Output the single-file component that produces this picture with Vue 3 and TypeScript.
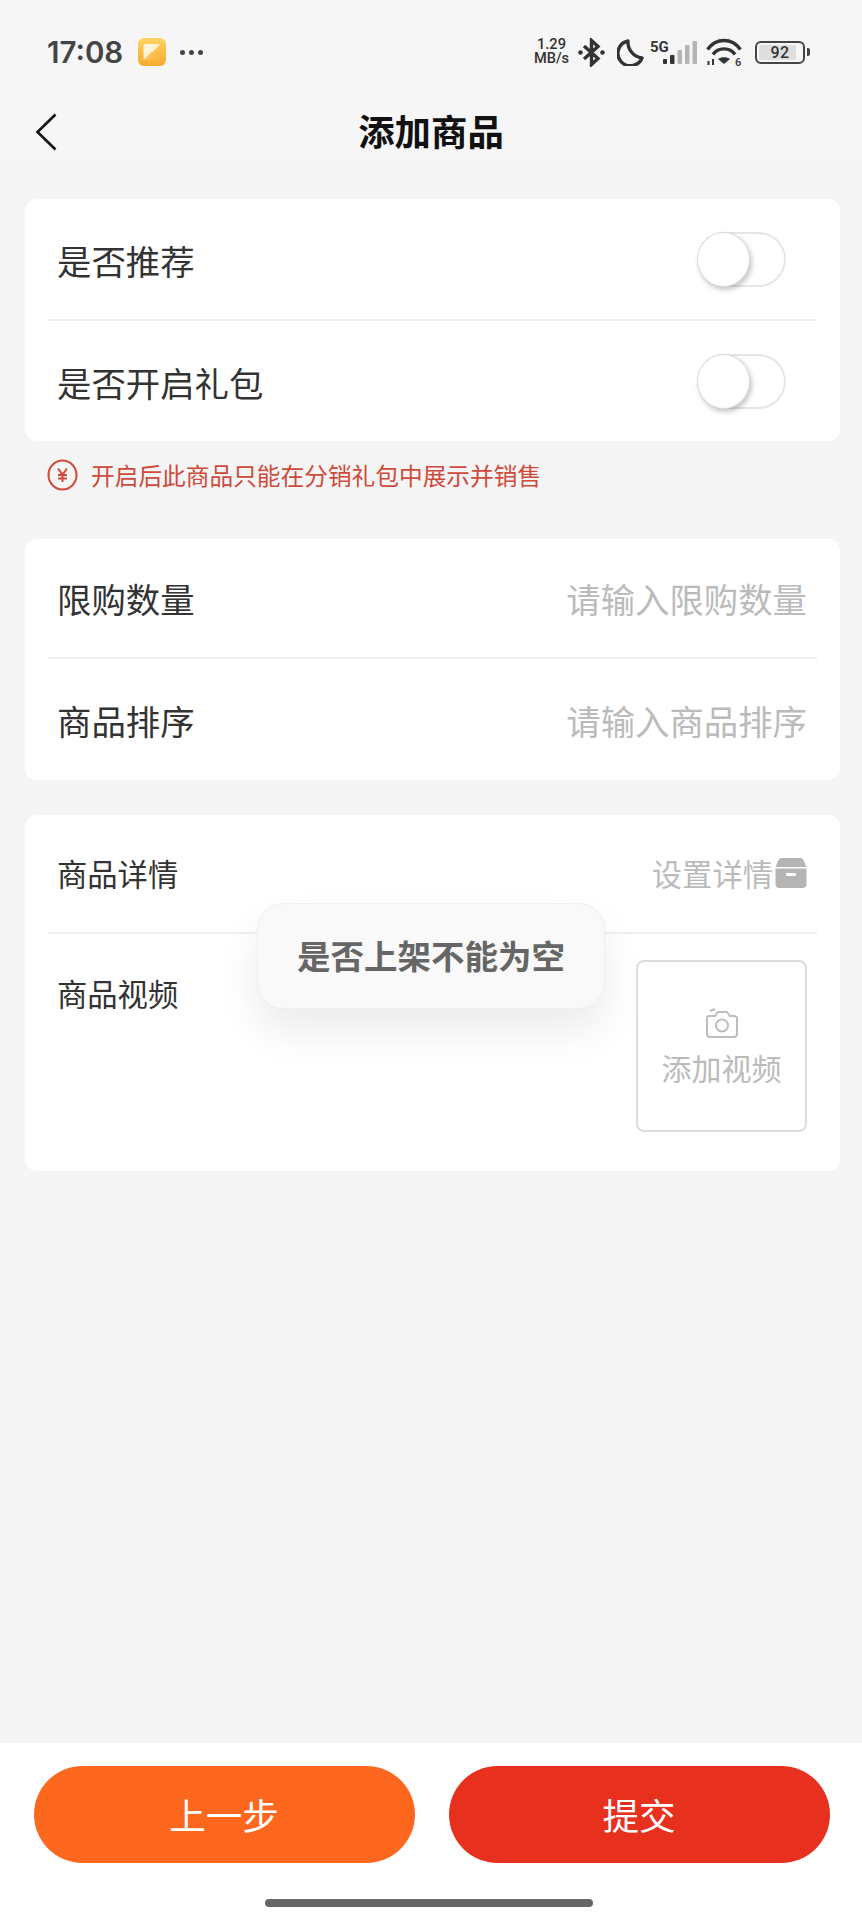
<script setup lang="ts">
import { ref } from 'vue'

const recommend = ref(false)
const giftPack = ref(false)
const toast = ref('是否上架不能为空')
</script>

<template>
  <div class="page">
    <div class="status">
      <div class="status-left">
        <span class="time">17:08</span>
        <svg class="app-icon" width="28" height="28" viewBox="0 0 28 28">
          <defs>
            <linearGradient id="appBg" x1="0" y1="0" x2="0" y2="1">
              <stop offset="0" stop-color="#fdd463" />
              <stop offset="1" stop-color="#f8a92c" />
            </linearGradient>
            <linearGradient id="appIn" x1="0" y1="0" x2="1" y2="1">
              <stop offset="0" stop-color="#fff8e6" />
              <stop offset="0.5" stop-color="#fff1cc" />
              <stop offset="0.5" stop-color="#fdc558" />
              <stop offset="1" stop-color="#fab236" />
            </linearGradient>
          </defs>
          <rect width="28" height="28" rx="6" fill="url(#appBg)" />
          <rect x="5.5" y="6" width="17" height="16" rx="1.5" fill="url(#appIn)" />
        </svg>
        <span class="dots"><i></i><i></i><i></i></span>
      </div>
      <div class="status-right">
        <span class="speed">1.29<br />MB/s</span>
        <svg class="bt" width="27" height="29" viewBox="0 0 27 29" fill="none" stroke="#333" stroke-width="3.4">
          <path d="M6 8 L20 20.5 L13.5 26.5 V2.5 L20 8.5 L6 21" />
          <circle cx="2.5" cy="14.5" r="2.3" fill="#333" stroke="none" />
          <circle cx="24.5" cy="14.5" r="2.3" fill="#333" stroke="none" />
        </svg>
        <svg class="moon" width="27" height="27" viewBox="0 0 27 27" fill="none" stroke="#333" stroke-width="3.4">
          <path d="M11 2 A12.5 12.5 0 1 0 25 19 A16 16 0 0 1 11 2 Z" stroke-linejoin="round" />
        </svg>
        <svg class="signal" width="47" height="26" viewBox="0 0 47 26">
          <text x="0" y="13" class="five-g">5G</text>
          <rect x="13" y="20" width="4" height="5" rx="1" fill="#333" />
          <rect x="20" y="16" width="4.5" height="9" rx="1" fill="#333" />
          <rect x="27.5" y="11" width="4.5" height="14" rx="1" fill="#b4b4b4" />
          <rect x="35" y="6" width="4.5" height="19" rx="1" fill="#b4b4b4" />
          <rect x="42.5" y="2" width="4.5" height="23" rx="1" fill="#b4b4b4" />
        </svg>
        <svg class="wifi" width="36" height="32" viewBox="0 0 36 32" fill="none" stroke="#333" stroke-width="3.4">
          <path d="M1.5 11.5 C10 -0.5 26 -0.5 34.5 11.5" />
          <path d="M7 16.5 C12 9 24 9 29 16.5" />
          <path d="M12 21 C15 18.5 21 18.5 24 21 L18 26 Z" fill="#333" stroke="none" />
          <path d="M2.5 23 V27 M7 21 V27" stroke-width="2" />
          <text x="29" y="27.5" class="wifi-six">6</text>
        </svg>
        <div class="battery">
          <span class="cell"><span class="level"></span><b>92</b></span>
          <i class="nub"></i>
        </div>
      </div>
    </div>

    <header class="nav">
      <svg class="back" width="22" height="38" viewBox="0 0 22 38" fill="none" stroke="#111" stroke-width="2.6">
        <path d="M20.5 1.5 L2.5 19 L20.5 36.5" />
      </svg>
      <h1>添加商品</h1>
    </header>

    <main class="content">
      <section class="card switches">
        <div class="row">
          <span class="label">是否推荐</span>
          <button class="switch" type="button" :class="{ on: recommend }" @click="recommend = !recommend">
            <span class="knob"></span>
          </button>
        </div>
        <div class="line"></div>
        <div class="row">
          <span class="label">是否开启礼包</span>
          <button class="switch" type="button" :class="{ on: giftPack }" @click="giftPack = !giftPack">
            <span class="knob"></span>
          </button>
        </div>
      </section>

      <p class="note">
        <svg width="31" height="32" viewBox="0 0 31 32" fill="none" stroke="#cf4a3b" stroke-width="2">
          <ellipse cx="15.5" cy="16" rx="14" ry="14.5" />
          <path d="M11 9.5 L15.5 15.5 L20 9.5 M15.5 15.5 V23 M11 16 H20 M11 19.5 H20" />
        </svg>
        <span>开启后此商品只能在分销礼包中展示并销售</span>
      </p>

      <section class="card inputs">
        <div class="row">
          <span class="label">限购数量</span>
          <span class="hint">请输入限购数量</span>
        </div>
        <div class="line"></div>
        <div class="row">
          <span class="label">商品排序</span>
          <span class="hint">请输入商品排序</span>
        </div>
      </section>

      <section class="card detail">
        <div class="row small">
          <span class="label">商品详情</span>
          <span class="set">
            设置详情
            <svg width="32" height="30" viewBox="0 0 31 30">
              <path d="M6 0 H25 Q27 0 28 2 L31 9 H0 L3 2 Q4 0 6 0 Z" fill="#b5b5b5" />
              <path d="M0 10.5 H31 V26 Q31 30 27 30 H4 Q0 30 0 26 Z" fill="#b5b5b5" />
              <rect x="10.5" y="15" width="10" height="3" rx="1" fill="#fff" />
            </svg>
          </span>
        </div>
        <div class="line"></div>
        <div class="video-row">
          <span class="label">商品视频</span>
          <div class="video-box">
            <svg width="32" height="30" viewBox="0 0 32 30" fill="none" stroke="#bdbdbd" stroke-width="2">
              <path d="M3 8 H9 L12 4 H21 L24 8 H28 Q31 8 31 11 V26 Q31 29 28 29 H4 Q1 29 1 26 V10 Q1 8 3 8 Z" />
              <circle cx="16" cy="17.5" r="6" />
              <path d="M4 3 L9 1" />
            </svg>
            <span>添加视频</span>
          </div>
        </div>
        <div v-if="toast" class="toast">{{ toast }}</div>
      </section>
    </main>

    <footer class="footer">
      <div class="buttons">
        <button class="btn prev" type="button">上一步</button>
        <button class="btn submit" type="button">提交</button>
      </div>
      <div class="home-bar"></div>
    </footer>
  </div>
</template>

<style scoped>
.page {
  width: 862px;
  height: 1920px;
  display: flex;
  flex-direction: column;
  background: #f5f5f5;
  font-family: "Noto Sans CJK SC", "Liberation Sans", sans-serif;
  color: #333;
  overflow: hidden;
}

.status {
  height: 104px;
  flex-shrink: 0;
  display: flex;
  justify-content: space-between;
  align-items: center;
  padding: 0 52px 0 47px;
  background: #f6f6f6;
}

.status-left {
  display: flex;
  align-items: center;
}

.time {
  width: 91px;
  font-family: Inter, "Liberation Sans", sans-serif;
  font-size: 29.5px;
  font-weight: 600;
  color: #444;
}

.dots {
  display: flex;
  gap: 4px;
  margin-left: 14px;
}

.dots i {
  width: 5px;
  height: 5px;
  border-radius: 50%;
  background: #444;
}

.status-right {
  display: flex;
  align-items: center;
}

.speed {
  width: 37px;
  font-family: Roboto, "Liberation Sans", sans-serif;
  font-size: 14.6px;
  font-weight: 500;
  line-height: 13.6px;
  text-align: center;
  color: #333;
  white-space: nowrap;
}

.bt {
  margin-left: 8px;
}

.moon {
  margin-left: 12px;
}

.signal {
  margin-left: 6px;
}

.five-g {
  font-family: Roboto, "Liberation Sans", sans-serif;
  font-size: 15px;
  font-weight: 700;
  fill: #333;
}

.wifi {
  margin-left: 9px;
  margin-top: 4px;
}

.wifi-six {
  font-family: Roboto, "Liberation Sans", sans-serif;
  font-size: 11px;
  font-weight: 500;
  stroke: none;
  fill: #333;
}

.battery {
  margin-left: 13px;
  display: flex;
  align-items: center;
  gap: 2px;
}

.cell {
  position: relative;
  width: 50px;
  height: 23px;
  box-sizing: border-box;
  border: 2.5px solid #444;
  border-radius: 6px;
  display: flex;
  align-items: center;
  justify-content: center;
}

.level {
  position: absolute;
  left: 2px;
  top: 2px;
  bottom: 2px;
  width: 37px;
  background: #dedede;
  border-radius: 2px;
}

.cell b {
  position: relative;
  font-family: Roboto, "Liberation Sans", sans-serif;
  font-size: 16px;
  font-weight: 500;
  letter-spacing: 0.5px;
  color: #333;
}

.nub {
  width: 3px;
  height: 8px;
  background: #444;
  border-radius: 0 2px 2px 0;
}

.nav {
  position: relative;
  height: 56px;
  flex-shrink: 0;
  display: flex;
  align-items: center;
  justify-content: center;
  background: #f6f6f6;
}

.back {
  position: absolute;
  left: 35px;
  top: 9px;
}

.nav h1 {
  margin: 0 0 4px;
  font-size: 36.4px;
  font-weight: 700;
  line-height: 52px;
  color: #111;
}

.content {
  flex: 1;
  padding: 39px 22px 0 25px;
}

.card {
  padding: 0 23px;
  background: #fff;
  border-radius: 12px;
}

.row {
  height: 120px;
  display: flex;
  align-items: center;
  justify-content: space-between;
  padding: 0 10px 0 9px;
}

.label {
  font-size: 34.4px;
  line-height: 40px;
  color: #333;
}

.switches .label {
  margin-top: 2px;
}

.inputs .row:first-child {
  height: 118px;
}

.inputs .row:last-child {
  height: 121px;
}

.hint {
  font-size: 34.4px;
  line-height: 40px;
  color: #bbb;
}

.line {
  height: 2px;
  background: #f0f0f0;
}

.switch {
  display: flex;
  width: 89px;
  height: 55px;
  margin-right: 21px;
  padding: 0;
  border: none;
  border-radius: 28px;
  background: #fff;
  box-shadow: inset 0 0 0 2px #e6e6e6;
  cursor: pointer;
}

.switch.on {
  justify-content: flex-end;
  background: #e8301e;
}

.knob {
  width: 53px;
  height: 55px;
  box-sizing: border-box;
  border: 1px solid #dcdcdc;
  border-radius: 50%;
  background: #fff;
  box-shadow: 2px 3px 5px rgba(0, 0, 0, 0.22);
}

.note {
  height: 98px;
  margin: 0;
  display: flex;
  align-items: center;
  gap: 13px;
  padding: 0 0 30px 22px;
  box-sizing: border-box;
  font-size: 23.7px;
  color: #cf4a3b;
}

.detail {
  position: relative;
  margin-top: 35px;
}

.row.small {
  height: 117px;
}

.small .label {
  margin-bottom: 2px;
  font-size: 30.3px;
}

.set {
  display: flex;
  align-items: center;
  gap: 2px;
  margin-bottom: 2px;
  font-size: 30.3px;
  line-height: 40px;
  color: #bbb;
}

.video-row {
  display: flex;
  justify-content: space-between;
  padding: 26px 10px 39px 9px;
}

.video-row .label {
  margin-top: 13px;
  font-size: 30.3px;
}

.video-box {
  width: 171px;
  height: 172px;
  box-sizing: border-box;
  border: 2px solid #ddd;
  border-radius: 8px;
  display: flex;
  flex-direction: column;
  align-items: center;
  padding-top: 46px;
  font-size: 30px;
  line-height: 40px;
  color: #bbb;
}

.video-box span {
  margin-top: 9px;
}

.toast {
  position: absolute;
  left: 232px;
  top: 88px;
  width: 348px;
  height: 106px;
  box-sizing: border-box;
  display: flex;
  align-items: center;
  justify-content: center;
  padding-bottom: 4px;
  border: 1px solid #efefef;
  border-radius: 26px;
  background: #f9f9f9;
  box-shadow: 0 22px 40px rgba(0, 0, 0, 0.08);
  font-size: 33.5px;
  font-weight: 700;
  color: #666;
}

.footer {
  height: 177px;
  flex-shrink: 0;
  display: flex;
  flex-direction: column;
  align-items: center;
  background: #fff;
}

.buttons {
  display: flex;
  gap: 34px;
  margin: 23px 0 0 1px;
}

.btn {
  width: 381px;
  height: 97px;
  border: none;
  border-radius: 49px;
  font-family: inherit;
  font-size: 36.6px;
  color: #fff;
  cursor: pointer;
}

.prev {
  background: #fe671e;
}

.submit {
  background: #e8301e;
}

.home-bar {
  width: 328px;
  height: 8px;
  margin: 36px 5px 0 0;
  border-radius: 4px;
  background: #666;
}
</style>
